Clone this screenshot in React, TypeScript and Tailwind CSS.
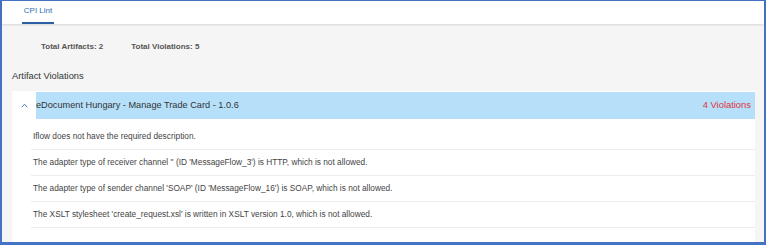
const violations = [
  'Iflow does not have the required description.',
  "The adapter type of receiver channel '' (ID 'MessageFlow_3') is HTTP, which is not allowed.",
  "The adapter type of sender channel 'SOAP' (ID 'MessageFlow_16') is SOAP, which is not allowed.",
  "The XSLT stylesheet 'create_request.xsl' is written in XSLT version 1.0, which is not allowed.",
]

export default function App() {
  return (
    <div
      className="w-[766px] h-[245px] box-border flex flex-col bg-[#f5f5f5] border-[#4472c4] border-t border-l-2 border-r-2 border-b-[3px] text-[#333]"
      style={{ fontFamily: '"Liberation Sans", Arial, sans-serif' }}
    >
      {/* Tab bar */}
      <div className="h-[23px] shrink-0 bg-white shadow-[0_1px_2px_rgba(0,0,0,0.12)] pl-[20px] flex">
        <div className="w-[32px] flex flex-col items-center justify-between">
          <span className="pt-[5px] text-[8px] leading-[10px] text-[#2f6db3]">CPI Lint</span>
          <div className="w-full h-[2px] bg-[#2a5fa4]" />
        </div>
      </div>

      {/* Totals */}
      <div className="mt-[15px] h-[16px] pl-[39px] flex items-center gap-[28px] text-[8px] font-bold text-[#555]">
        <span>Total Artifacts: 2</span>
        <span>Total Violations: 5</span>
      </div>

      <div className="mt-[15px] h-[14px] pl-[10px] flex items-center text-[9.3px] text-[#333]">
        Artifact Violations
      </div>

      {/* Panel */}
      <div className="mt-[7px] ml-[10px] mr-[9px] flex-1 bg-white pt-px flex flex-col">
        <div className="h-[27px] flex items-stretch">
          <div className="w-[24px] flex items-center justify-center pl-[1px]">
            <svg width="7" height="5" viewBox="0 0 7 5" fill="none">
              <path d="M0.8 4.2 L3.5 1.2 L6.2 4.2" stroke="#4a78b8" strokeWidth="1" />
            </svg>
          </div>
          <div className="flex-1 bg-[#b6e0fa] flex items-center justify-between pr-[4px]">
            <span className="text-[9.2px] text-[#333]">eDocument Hungary - Manage Trade Card - 1.0.6</span>
            <span className="text-[9.4px] text-[#e0323c]">4 Violations</span>
          </div>
        </div>
        <div className="pt-[5px] pl-[19px]">
          {violations.map((v) => (
            <div key={v} className="h-[26px] border-b border-[#ececec] flex items-center pl-[2px] text-[8.3px] text-[#444]">
              {v}
            </div>
          ))}
        </div>
      </div>
    </div>
  )
}
